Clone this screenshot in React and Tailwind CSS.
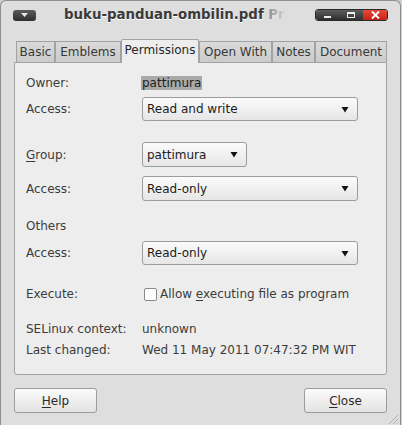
import { useState } from 'react'

const TABS = [
  { label: 'Basic', w: 'w-[39px]' },
  { label: 'Emblems', w: 'w-[66px]' },
  { label: 'Permissions', w: 'w-[78px]', active: true },
  { label: 'Open With', w: 'w-[73px]' },
  { label: 'Notes', w: 'w-[43px]' },
  { label: 'Document', w: 'w-[72px]' },
]

function Combo({ value, width = 'w-[216px]', h = 'h-[24px]' }) {
  return (
    <div
      className={`${width} ${h} flex items-center justify-between pl-[4px] pr-[8px] rounded-[3px] border border-[#9c9c9c] bg-gradient-to-b from-[#fbfbfb] to-[#e6e6e6] text-[#1c1c1c]`}
    >
      <span>{value}</span>
      <svg width="8" height="7" viewBox="0 0 8 7">
        <path d="M0.5 1 L7.5 1 L4 6.5 Z" fill="#111" />
      </svg>
    </div>
  )
}

function Row({ label, children, className = '' }) {
  return (
    <div className={`flex items-center ${className}`}>
      <div className="w-[116px] shrink-0">{label}</div>
      {children}
    </div>
  )
}

export default function App() {
  const [exec, setExec] = useState(false)

  return (
    <div
      className="w-[402px] h-[425px] bg-[#cfcfcf] overflow-hidden text-[12px] leading-[14px] text-[#3c3c3c]"
      style={{ fontFamily: '"DejaVu Sans", Verdana, sans-serif' }}
    >
      <div className="w-[401px] h-[425px] bg-[#dedede] border-l border-r border-t border-[#8e8e8e] rounded-t-[6px] flex flex-col">
        {/* title bar */}
        <div className="h-[30px] flex items-center pl-[12px] pr-[12px] shrink-0">
          <div className="w-[23px] h-[11px] rounded-[3px] bg-gradient-to-b from-[#5c5c5c] to-[#2e2e2e] flex items-center justify-center -mt-[2px]">
            <svg width="7" height="4" viewBox="0 0 7 4">
              <path d="M0 0 L7 0 L3.5 4 Z" fill="#e8e8e8" />
            </svg>
          </div>
          <div className="ml-[28px] whitespace-nowrap text-[13.33px] font-bold text-[#3a3a3a] -mt-[3px] [text-shadow:0_1px_0_#ffffff]">
            buku-panduan-ombilin.pdf{' '}
            <span className="bg-gradient-to-r from-[#8e8e8e] to-[#d4d4d4] bg-clip-text text-transparent [text-shadow:none]">
              Pr
            </span>
          </div>
          <div className="ml-auto -mt-[3px] flex h-[12px] w-[73px] rounded-[3px] overflow-hidden border border-[#2a2a2a]">
            <div className="flex-1 bg-gradient-to-b from-[#5e5e5e] to-[#2f2f2f] flex items-center justify-around">
              <div className="w-[7px] h-[2px] bg-[#eeeeee] mt-[4px]" />
              <div className="w-[8px] h-[6px] border-[1.5px] border-[#eeeeee] border-t-[2px]" />
            </div>
            <div className="w-[24px] bg-gradient-to-b from-[#e9483a] to-[#c4200f] flex items-center justify-center">
              <svg width="9" height="8" viewBox="0 0 9 8">
                <path d="M1 0.5 L8 7.5 M8 0.5 L1 7.5" stroke="#ffffff" strokeWidth="1.8" />
              </svg>
            </div>
          </div>
        </div>

        {/* tabs */}
        <div className="mt-[9px] pl-[14px] flex items-end h-[22px] relative z-10">
          {TABS.map((t) =>
            t.active ? (
              <div
                key={t.label}
                className={`${t.w} h-[24px] -mb-[1px] flex items-start justify-center pt-[3px] bg-[#ededed] border border-b-0 border-[#a2a2a2] rounded-t-[2px] text-[#262626]`}
              >
                {t.label}
              </div>
            ) : (
              <div
                key={t.label}
                className={`${t.w} h-[21px] flex items-center justify-center bg-gradient-to-b from-[#dadada] to-[#cbcbcb] border border-b-0 border-[#a2a2a2] first:ml-[1px] text-[#383838]`}
              >
                {t.label}
              </div>
            )
          )}
        </div>

        {/* panel */}
        <div className="mx-[13px] h-[314px] bg-[#ededed] border border-[#a2a2a2] rounded-b-[3px] pl-[11px] pt-[13px] flex flex-col">
          <Row label="Owner:" className="h-[14px]">
            <span className="bg-[#a9a9a9] text-[#1e1e1e] px-[1px] -ml-[1px]">pattimura</span>
          </Row>
          <Row label="Access:" className="mt-[7px]">
            <Combo value="Read and write" />
          </Row>
          <Row
            label={
              <span>
                <span className="underline underline-offset-2">G</span>roup:
              </span>
            }
            className="mt-[21px]"
          >
            <Combo value="pattimura" width="w-[105px]" h="h-[25px]" />
          </Row>
          <Row label="Access:" className="mt-[9px]">
            <Combo value="Read-only" h="h-[25px]" />
          </Row>
          <div className="mt-[18px] h-[14px]">Others</div>
          <Row label="Access:" className="mt-[8px]">
            <Combo value="Read-only" />
          </Row>
          <Row label="Execute:" className="mt-[22px] h-[14px]">
            <label className="flex items-center gap-[3px] ml-[2px] cursor-default">
              <span
                onClick={() => setExec(!exec)}
                className="w-[13px] h-[13px] bg-white border border-[#8a8a8a] rounded-[2px] flex items-center justify-center"
              >
                {exec && (
                  <svg width="9" height="9" viewBox="0 0 9 9">
                    <path d="M1 4.5 L3.5 7 L8 1.5" stroke="#222" strokeWidth="1.6" fill="none" />
                  </svg>
                )}
              </span>
              <span>
                Allow <span className="underline underline-offset-2">e</span>xecuting file as program
              </span>
            </label>
          </Row>
          <Row label="SELinux context:" className="mt-[21px] h-[14px]">
            <span>unknown</span>
          </Row>
          <Row label="Last changed:" className="mt-[7px] h-[14px]">
            <span>Wed 11 May 2011 07:47:32 PM WIT</span>
          </Row>
        </div>

        {/* buttons */}
        <div className="mt-[13px] px-[13px] flex justify-between">
          <button className="w-[83px] h-[25px] rounded-[3px] border border-[#9c9c9c] bg-gradient-to-b from-[#fbfbfb] to-[#e3e3e3] text-[#2a2a2a]">
            <span className="underline underline-offset-2">H</span>elp
          </button>
          <button className="w-[83px] h-[25px] rounded-[3px] border border-[#9c9c9c] bg-gradient-to-b from-[#fbfbfb] to-[#e3e3e3] text-[#2a2a2a]">
            <span className="underline underline-offset-2">C</span>lose
          </button>
        </div>
        <div className="flex justify-end pr-[1px] mt-auto">
          <svg width="12" height="12" viewBox="0 0 12 12">
            <path d="M11 2 L2 11 M11 6 L6 11 M11 9.5 L9.5 11" stroke="#b0b0b0" strokeWidth="1" />
          </svg>
        </div>
      </div>
    </div>
  )
}
